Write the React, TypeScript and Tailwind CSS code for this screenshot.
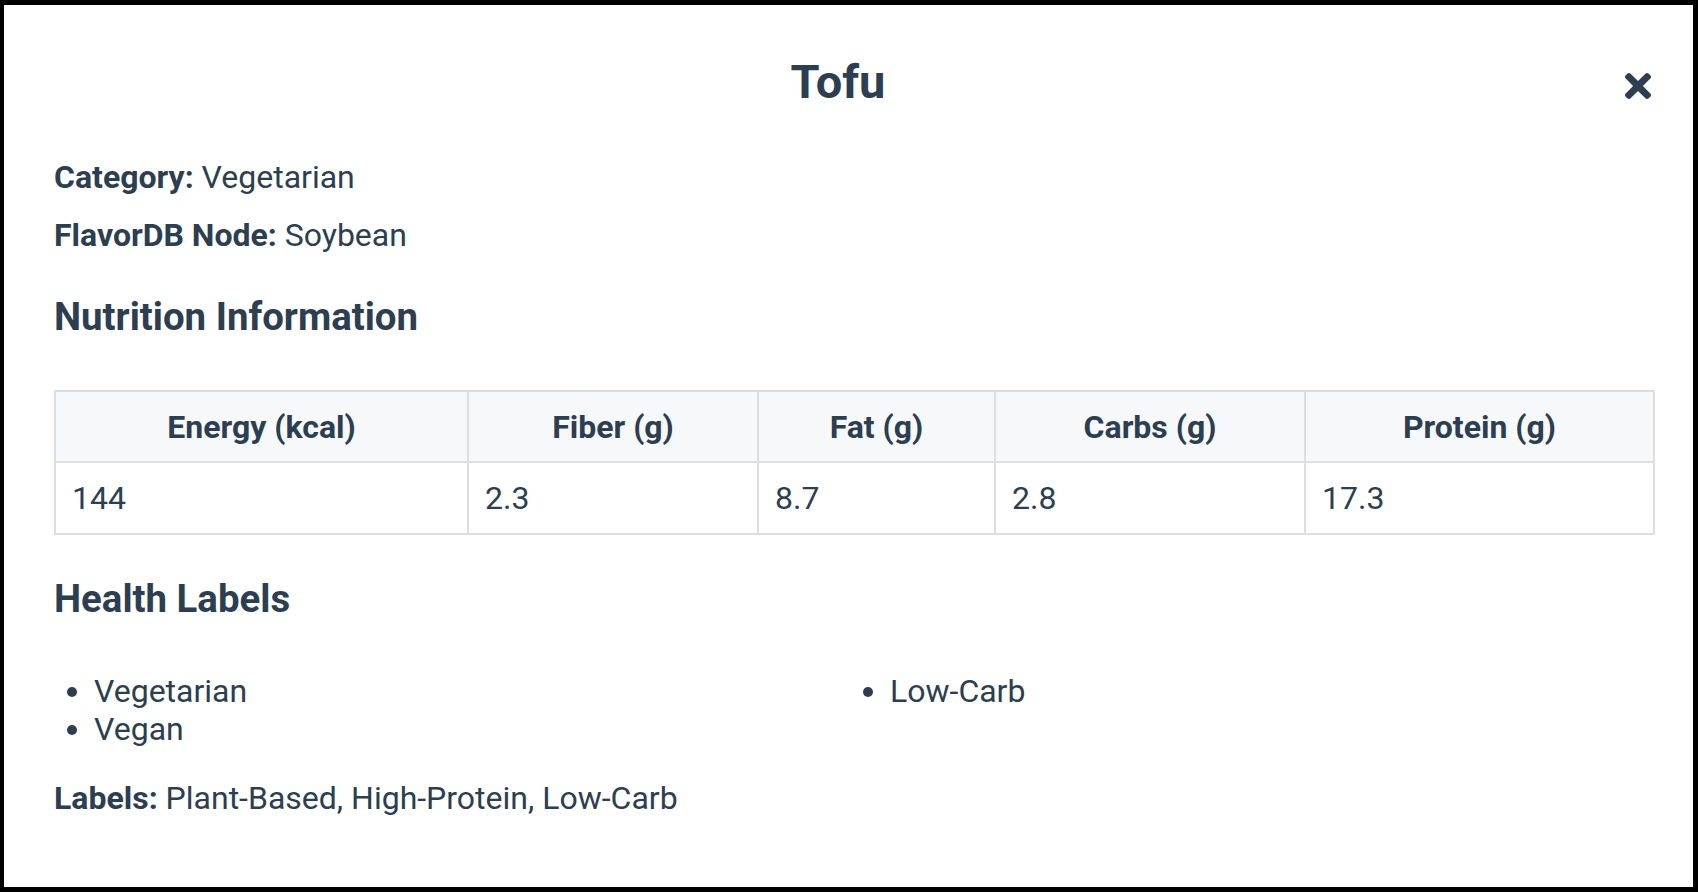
import React from "react";

const cols = [
  { label: "Energy (kcal)", value: "144", w: "w-[413px]" },
  { label: "Fiber (g)", value: "2.3", w: "w-[290px]" },
  { label: "Fat (g)", value: "8.7", w: "w-[237px]" },
  { label: "Carbs (g)", value: "2.8", w: "w-[310px]" },
  { label: "Protein (g)", value: "17.3", w: "w-[349px]" },
];

function CloseIcon() {
  return (
    <svg width="26" height="26" viewBox="0 80 352 352" fill="#2c3e50" aria-hidden="true">
      <path d="M242.72 256l100.07-100.07c12.28-12.28 12.28-32.19 0-44.48l-22.24-22.24c-12.28-12.28-32.19-12.28-44.48 0L176 189.28 75.93 89.21c-12.28-12.28-32.19-12.28-44.48 0L9.21 111.45c-12.28 12.28-12.28 32.19 0 44.48L109.28 256 9.21 356.07c-12.28 12.28-12.28 32.19 0 44.48l22.24 22.24c12.28 12.28 32.2 12.28 44.48 0L176 322.72l100.07 100.07c12.28 12.28 32.2 12.28 44.48 0l22.24-22.24c12.28-12.28 12.28-32.19 0-44.48L242.72 256z" />
    </svg>
  );
}

export default function App() {
  return (
    <div className="w-[1698px] h-[892px] bg-white border-black border-t-[5px] border-l-[4px] border-r-[5px] border-b-[5px] overflow-hidden">
      <div
        className="pl-[50px] pt-[49px] w-[1650px] text-[#2c3e50]"
        style={{ fontFamily: "Roboto, 'Noto Sans', sans-serif" }}
      >
        {/* header */}
        <div className="flex items-start">
          <h2 className="flex-1 text-center text-[47px] leading-[55px] font-bold">Tofu</h2>
          <button className="mt-[16px] w-[32px] h-[32px] flex items-center justify-center">
            <CloseIcon />
          </button>
        </div>

        <p className="mt-[44px] text-[32px] leading-[48px]">
          <span className="font-bold">Category:</span> Vegetarian
        </p>
        <p className="mt-[10px] text-[32px] leading-[48px]">
          <span className="font-bold">FlavorDB Node:</span> Soybean
        </p>

        <h3 className="mt-[35px] text-[38.4px] leading-[46px] font-bold">Nutrition Information</h3>

        <table className="mt-[50px] w-[1599px] table-fixed border-collapse text-[32px]">
          <colgroup>
            {cols.map((c) => (
              <col key={c.label} className={c.w} />
            ))}
          </colgroup>
          <thead>
            <tr className="bg-[#f7f8fa]">
              {cols.map((c) => (
                <th
                  key={c.label}
                  className="h-[71px] border-2 border-[#dedede] text-center font-bold leading-[38px] p-0"
                >
                  {c.label}
                </th>
              ))}
            </tr>
          </thead>
          <tbody>
            <tr>
              {cols.map((c) => (
                <td
                  key={c.label}
                  className="h-[72px] border-2 border-[#dedede] text-left pl-[16px] leading-[38px]"
                >
                  {c.value}
                </td>
              ))}
            </tr>
          </tbody>
        </table>

        <h3 className="mt-[41px] text-[38.4px] leading-[46px] font-bold">Health Labels</h3>

        <ul className="mt-[51px] w-[1600px] pl-[40px] columns-2 gap-x-8 list-disc text-[32px] leading-[37.5px]">
          <li>Vegetarian</li>
          <li>Vegan</li>
          <li>Low-Carb</li>
        </ul>

        <p className="mt-[26px] text-[32px] leading-[48px]">
          <span className="font-bold">Labels:</span> Plant-Based, High-Protein, Low-Carb
        </p>
      </div>
    </div>
  );
}
